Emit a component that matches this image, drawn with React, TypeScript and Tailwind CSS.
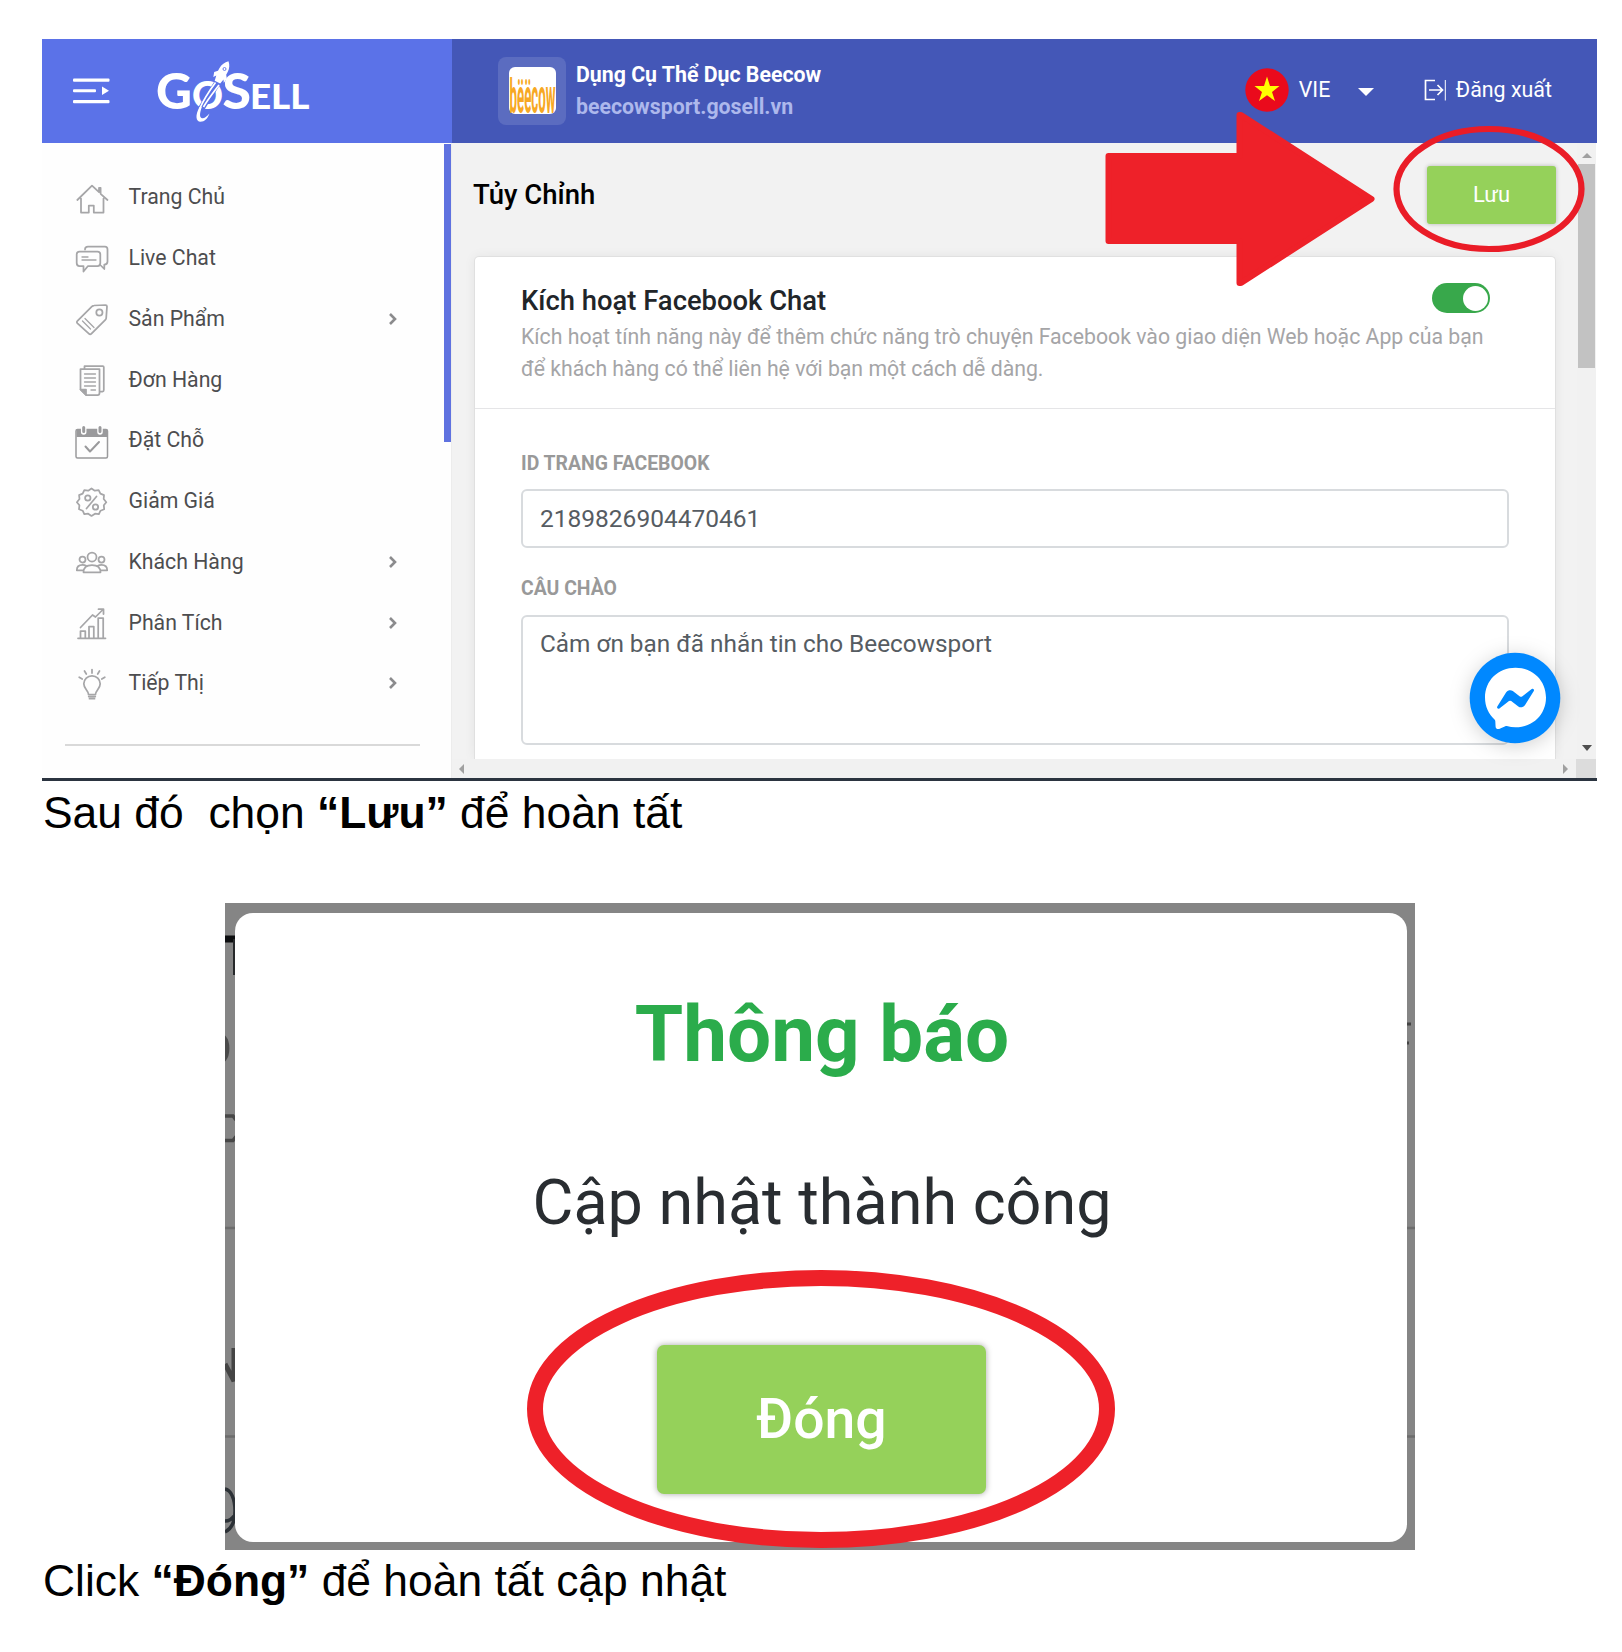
import type { ReactNode } from "react";

function Icon({ children }: { children: ReactNode }) {
  return (
    <svg viewBox="0 0 34 34" className="mt-[3px] h-[34px] w-[34px] shrink-0" fill="none" stroke="#a6a6a8" strokeWidth="1.75" strokeLinecap="round" strokeLinejoin="round">
      {children}
    </svg>
  );
}

const homeIcon = (
  <Icon>
    <path d="M2.3 18 17 3.6l7 6.6V5.800h1.600v6L32.500 18M6 16.500v14h7.800v-7h5v7h9.700v-14" />
  </Icon>
);
const chatIcon = (
  <Icon>
    <path d="M10 6.5C10 4.500 11 3.700 13 3.700h17c2 0 2.500 1 2.500 2.800v12c0 2-1 3-3.200 3v4.500l-3.500-3.500" />
    <path d="M4.500 8.500h18c2 0 2.800 1 2.800 2.800V20c0 2-1 3-2.800 3H13l-4.500 5.500V23h-4c-1.800 0-2.800-1-2.800-3v-8.700c0-1.800 1-2.800 2.800-2.800z" />
    <path d="M7 14h6M7 17h14" strokeWidth="1.300" />
  </Icon>
);
const tagIcon = (
  <Icon>
    <path d="M19 2.500 30.500 2c1 0 1.500.6 1.500 1.500l-.8 11.500c0 .8-.3 1.300-.9 1.900L16.500 30.700c-.9.900-1.800.9-2.700 0L2.500 20.300c-.9-.9-.9-1.600 0-2.500L17 3.300c.6-.5 1.200-.8 2-.8z" />
    <circle cx="24.400" cy="9.500" r="3.100" />
    <path d="m10 15.500 9 9M7.500 18l8 8" strokeWidth="1.300" />
  </Icon>
);
const ordersIcon = (
  <Icon>
    <path d="M9.500 5V2.200h18.300c.7 0 1 .4 1 1V26c0 1-.5 1.500-1.300 1.500h-2" />
    <path d="M5.500 5h19v24c0 1.300-.6 2-1.800 2H11l-5.500-5.500z" />
    <path d="M9.500 10h11M9.500 14h11M9.500 18h11M9.500 22h11M16 26h4.500" strokeWidth="1.300" />
    <path d="M5.500 25.500H11V31z" fill="#a3a3a5" />
  </Icon>
);
const bookingIcon = (
  <Icon>
    <rect x="1" y="4.500" width="31.500" height="28.500" rx="1.500" stroke="#9a9a9c" strokeWidth="1.500" />
    <path d="M1.500 5h30.500v7H1.500z" fill="#9a9a9c" stroke="none" />
    <path d="M8.700 2.500v4.500M25 2.500v4.500" stroke="#fff" strokeWidth="5.500" />
    <path d="M8.700 2.500v4M25 2.500v4" stroke="#9a9a9c" strokeWidth="3" />
    <path d="m10.500 21.500 4.500 5 9-9.500" stroke="#9a9a9c" strokeWidth="2" />
  </Icon>
);
const discountIcon = (
  <Icon>
    <path d="M16.500 2.500l3.300 2.200 3.900-.6 1.700 3.500 3.600 1.500-.3 3.900 2.600 3.200-2.500 3.100.4 3.900-3.700 1.500-1.600 3.500-3.900-.5-3.500 2.200-3.300-2.200-3.900.5-1.600-3.500L4 23.200l.4-3.900-2.500-3.100L4.500 13l-.4-3.900 3.600-1.500 1.600-3.500 3.900.6z" />
    <circle cx="12.800" cy="12" r="2.700" />
    <circle cx="20.500" cy="21" r="2.700" />
    <path d="M21.500 10.500 11.500 22.500" />
  </Icon>
);
const customersIcon = (
  <Icon>
    <circle cx="17" cy="11" r="4.500" />
    <circle cx="7.500" cy="13.500" r="3" />
    <circle cx="26.500" cy="13.500" r="3" />
    <path d="M8.500 26.300c0-4.600 2.700-7.300 8.500-7.300s8.500 2.700 8.500 7.300zM8 24.300H1.800c0-3.500 1.900-5.500 5.700-5.500 1.700 0 2.700.3 3.500.9M26 24.300h6.200c0-3.500-1.900-5.500-5.700-5.500-1.700 0-2.700.3-3.500.9" />
  </Icon>
);
const analyticsIcon = (
  <Icon>
    <path d="M3 31.300h27.500M5.500 31v-7h4.800v7M14 31V19.500h4.800V31M23.200 31V11h5v20" />
    <path d="M5.500 20.500 17.500 8l3 2 7.500-7.500M23.500 2.200h5v4.800" />
  </Icon>
);
const marketingIcon = (
  <Icon>
    <path d="M13.500 26.500c0-4-4.700-5.800-4.700-10.700A8.100 8.100 0 0 1 17 7.800a8.100 8.100 0 0 1 8.200 8c0 4.900-4.700 6.700-4.700 10.700z" />
    <path d="M13.700 28.500h6.600M14.500 30.700h5M17 1.500V5M9.500 3l1.800 3M24.500 3l-1.800 3M4.200 9.200 7.200 11M29.800 9.200 26.800 11" />
  </Icon>
);

const menu = [
  { label: "Trang Chủ", icon: homeIcon, more: false },
  { label: "Live Chat", icon: chatIcon, more: false },
  { label: "Sản Phẩm", icon: tagIcon, more: true },
  { label: "Đơn Hàng", icon: ordersIcon, more: false },
  { label: "Đặt Chỗ", icon: bookingIcon, more: false },
  { label: "Giảm Giá", icon: discountIcon, more: false },
  { label: "Khách Hàng", icon: customersIcon, more: true },
  { label: "Phân Tích", icon: analyticsIcon, more: true },
  { label: "Tiếp Thị", icon: marketingIcon, more: true },
];

function Logo() {
  return (
    <svg viewBox="0 0 160 70" className="ml-[43px] h-[70px] w-[160px]" fill="#fff" aria-label="GoSell">
      <g fontFamily="Lato" fontWeight="900">
        <text x="3" y="52.500" fontSize="49.500" textLength="36" lengthAdjust="spacingAndGlyphs">G</text>
        <text x="39" y="53" fontSize="37" textLength="31" lengthAdjust="spacingAndGlyphs">O</text>
        <text x="69.500" y="52.500" fontSize="49.500" textLength="28.500" lengthAdjust="spacingAndGlyphs">S</text>
        <text x="97" y="52.500" fontSize="34" textLength="59.500" lengthAdjust="spacingAndGlyphs">ELL</text>
      </g>
      <path d="M68 21 45.500 57" fill="none" stroke="#5b72e8" strokeWidth="6.500" />
      <path d="M75.500 5.200c-3.800.9-7 3.300-8.800 6.600l-1.700 3-3.800 1.200-.9 5 3-1.500-1.600 5.300 5.500 2.800 3.300-4 .3 3.300 3-4.300-.6-3.800 1.600-3.100c1.700-3.400 2-7 .7-10.500z" />
      <circle cx="71.500" cy="13" r="1.500" fill="none" stroke="#5b72e8" strokeWidth="0.900" />
      <path d="M62.500 26.500C57 34 51 43 47 52M66 29C60 37 55 43 50.500 51" fill="none" stroke="#fff" strokeWidth="1.700" />
      <path d="M46.500 51c-4.500 8-3.800 14.700 1 14.700 4 0 7-3 9-8.200-3 3.300-5.500 5.200-7.500 4.700-2.800-.8-2.300-5.200-.2-11.200z" />
    </svg>
  );
}

function SidebarHeader() {
  return (
    <div className="flex h-[104px] w-[410px] items-center bg-[#5b72e8] pl-[31px]">
      <svg viewBox="0 0 37 26" className="h-[26px] w-[37px]" fill="#fff">
        <rect y="0.500" width="36.500" height="3.200" rx="1" />
        <rect y="11.200" width="23" height="3" rx="1" />
        <rect y="22" width="36.500" height="3.200" rx="1" />
        <path d="M29 8.500 36 12.700 29 17z" />
      </svg>
      <Logo />
    </div>
  );
}

function TopBar() {
  return (
    <div className="flex h-[104px] w-[1145px] items-center bg-[#4457b7] pl-[46px] text-[21.4px] text-white">
      <div className="mt-[-1px] flex h-[68px] w-[68px] items-center justify-center rounded-lg bg-[#5b6cc0]">
        <svg viewBox="0 0 47 47" className="h-[47px] w-[47px] overflow-visible rounded-md bg-white">
          <text transform="translate(0.500 45.500) scale(1 2.850)" fontFamily="Roboto" fontWeight="700" fontSize="17" textLength="46" lengthAdjust="spacingAndGlyphs" fill="#f7a823">
            bëëcow
          </text>
        </svg>
      </div>
      <div className="ml-[10px] mt-[-1px] flex flex-col font-bold leading-[31.5px] text-[21.3px]">
        <span>Dụng Cụ Thể Dục Beecow</span>
        <span className="text-[#adb8ec]">beecowsport.gosell.vn</span>
      </div>
      <div className="ml-[423.5px] mt-[-2px] flex items-center">
        <svg viewBox="0 0 44 44" className="h-[44px] w-[44px]">
          <circle cx="22" cy="22" r="21.700" fill="#ea0a1c" />
          <path d="m22 8.500 3 9.500h9.500L27 24l3 9-8-5.700L14 33l3-9-7.500-6H19z" fill="#ff0" />
        </svg>
        <span className="ml-[10px]">VIE</span>
        <svg viewBox="0 0 16 8" className="ml-[28px] mt-[3px] h-[8px] w-[16px]" fill="#fff">
          <path d="M0 0h16L8 8z" />
        </svg>
        <svg viewBox="0 0 22 22" className="ml-[49.5px] h-[22px] w-[22px]" fill="none" stroke="#fff" strokeWidth="1.700">
          <path d="M11 1.500H1.500v19H11M5 11h13.500M13.500 6l5 5-5 5" />
          <path d="M21.300 1v20.500" strokeWidth="1" />
        </svg>
        <span className="ml-[10px]">Đăng xuất</span>
      </div>
    </div>
  );
}

function Sidebar() {
  return (
    <div className="relative h-[635px] w-[410px] border-r border-[#ececec] bg-[#fefefe] pt-[24px] text-[21.25px] text-[#4d4d4f]">
      {menu.map((m) => (
        <div key={m.label} className="flex h-[60.75px] items-center pl-[33px]">
          {m.icon}
          <span className="ml-[19.5px] flex-1">{m.label}</span>
          {m.more && (
            <svg viewBox="0 0 8 12" className="mr-[54px] h-[12px] w-[8px]" fill="none" stroke="#8b8b8d" strokeWidth="2.600">
              <path d="m1 1 5 5-5 5" />
            </svg>
          )}
        </div>
      ))}
      <div className="ml-[23px] mt-[30.250px] h-[2px] w-[355px] bg-[#d9d9d9]" />
      <div className="absolute right-0 top-[1px] h-[298px] w-[7px] bg-[#5f72e0]" />
    </div>
  );
}

function SettingsCard() {
  return (
    <div className="ml-[22px] mt-[32px] h-[503px] w-[1082px] rounded-t-[5px] border border-b-0 border-[#e0e0e0] bg-white shadow-[0_0_12px_rgba(0,0,0,0.06)]">
      <div className="flex h-[152px] border-b border-[#e5e5e7] pl-[46px] pt-[26px]">
        <div className="w-[911px]">
          <h2 className="text-[27.4px] font-medium leading-[36px] text-[#212529]">Kích hoạt Facebook Chat</h2>
          <p className="mt-[2px] w-[980px] text-[21.25px] leading-[31.8px] text-[#a5a5a7]">
            Kích hoạt tính năng này để thêm chức năng trò chuyện Facebook vào giao diện Web hoặc App của bạn
            <br />
            để khách hàng có thể liên hệ với bạn một cách dễ dàng.
          </p>
        </div>
        <div className="flex h-[30px] w-[58px] items-center justify-end rounded-full bg-[#38a84b] pr-[2px]">
          <div className="h-[25px] w-[25px] rounded-full bg-white" />
        </div>
      </div>
      <div className="ml-[46px] w-[988px]">
        <div className="pt-[41px] text-[19.4px] font-bold leading-[28px] text-[#999]">ID TRANG FACEBOOK</div>
        <div className="mt-[11px] flex h-[59px] items-center rounded-[6px] border-2 border-[#d8dbde] pl-[17px] text-[24.5px] text-[#565c62]">2189826904470461</div>
        <div className="mt-[27px] text-[19.4px] font-bold leading-[28px] text-[#999]">CÂU CHÀO</div>
        <div className="mt-[12px] h-[130px] rounded-[6px] border-2 border-[#d8dbde] pl-[17px] pt-[9px] text-[24.35px] leading-[36px] text-[#565c62]">Cảm ơn bạn đã nhắn tin cho Beecowsport</div>
      </div>
    </div>
  );
}

function MainPane() {
  return (
    <div className="relative h-[635px] w-[1144px] bg-[#f2f2f2]">
      <div className="flex h-[616px]">
        <div className="w-[1125px] overflow-hidden">
          <div className="flex items-center justify-between pl-[21px] pr-[21px] pt-[23px]">
            <h1 className="text-[27.5px] font-medium text-black">Tủy Chỉnh</h1>
            <div className="flex h-[58px] w-[129px] items-center justify-center rounded-[3px] bg-[#95d15a] text-[22px] text-white shadow-[0_0_4px_rgba(0,0,0,0.25)]">Lưu</div>
          </div>
          <SettingsCard />
        </div>
        <div className="flex w-[19px] flex-col items-center bg-[#f1f1f1]">
          <svg viewBox="0 0 10 5" className="mt-[10px] h-[5px] w-[10px]" fill="#a0a0a0">
            <path d="M0 5h10L5 0z" />
          </svg>
          <div className="mt-[6px] h-[204px] w-[17px] bg-[#c2c2c2]" />
          <svg viewBox="0 0 10 6" className="mb-[8px] mt-auto h-[6px] w-[10px]" fill="#4f4f4f">
            <path d="M0 0h10L5 6z" />
          </svg>
        </div>
      </div>
      <div className="flex h-[19px] items-center justify-between bg-[#f1f1f1] pl-[7px]">
        <svg viewBox="0 0 5 10" className="h-[10px] w-[5px]" fill="#a0a0a0">
          <path d="M5 0v10L0 5z" />
        </svg>
        <div className="flex h-full items-center gap-[8px]">
          <svg viewBox="0 0 5 10" className="h-[10px] w-[5px]" fill="#a0a0a0">
            <path d="M0 0v10L5 5z" />
          </svg>
          <div className="h-full w-[20px] bg-[#dcdcdc]" />
        </div>
      </div>
      <svg viewBox="0 0 130 130" className="absolute left-[998.300px] top-[489.500px] h-[130px] w-[130px] drop-shadow-[0_3px_10px_rgba(0,0,0,0.18)]">
        <circle cx="65" cy="65" r="45.300" fill="#0088ff" />
        <path d="M65.500 34.700C48 34.700 35 47.500 35 64.500c0 9 3.600 16.600 9.500 22 .5.500.8 1 .8 1.700l.3 5.500c.1 1.800 1.900 2.900 3.500 2.200l6.200-2.700c.5-.2 1.100-.3 1.600-.1 2.700.8 5.500 1.200 8.600 1.200 17.500 0 30.500-12.800 30.500-29.800S83 34.700 65.500 34.700z" fill="#fff" />
        <path d="m47.300 73.500 8.900-14.200a4.600 4.600 0 0 1 6.600-1.200l7.100 5.300a1.900 1.900 0 0 0 2.200 0l9.600-7.300c1.300-1 3 .6 2.100 1.900l-8.900 14.200a4.600 4.600 0 0 1-6.600 1.200l-7.100-5.300a1.900 1.900 0 0 0-2.200 0l-9.600 7.300c-1.300 1-3-.6-2.100-1.900z" fill="#0088ff" />
      </svg>
    </div>
  );
}

function Dashboard() {
  return (
    <div className="relative h-[742px] w-[1555px] font-['Roboto',sans-serif]">
      <div className="flex">
        <SidebarHeader />
        <TopBar />
      </div>
      <div className="flex">
        <Sidebar />
        <MainPane />
      </div>
      <div className="h-[3px] bg-[#2b3440]" />
      <svg viewBox="0 0 500 190" className="absolute left-[1055px] top-[66px] h-[190px] w-[500px]">
        <path d="M11.500 51h131V10h1.500L274.500 94l-130.500 84h-1.500v-42h-131z" fill="#ee2129" stroke="#ee2129" strokeWidth="6" strokeLinejoin="round" />
        <ellipse cx="392" cy="84" rx="92.500" ry="60" fill="none" stroke="#ea1c27" strokeWidth="6.200" />
      </svg>
    </div>
  );
}

function Notice() {
  return (
    <div className="relative h-[647px] w-[1190px] bg-[#858585] pl-[10px] pt-[10px] font-['Roboto',sans-serif]">
      <svg viewBox="0 0 1190 647" className="absolute left-0 top-0 h-[647px] w-[1190px]" fill="none">
        <path d="M0 36h10" stroke="#0c0d0f" strokeWidth="7" />
        <path d="M9.500 36v36" stroke="#26282a" strokeWidth="3" />
        <path d="M0 134c4.500 5 4.500 18 0 23z" fill="#4a4a4a" stroke="#4a4a4a" strokeWidth="2" />
        <path d="M0 213h8l3 4M0 237.500h8l3-4" stroke="#474747" strokeWidth="3.500" />
        <path d="M0 325h10M0 533.500h10M1180 325h10M1180 533.500h10" stroke="#6c6c6c" strokeWidth="2.500" />
        <path d="M9 445v33L0 461" stroke="#444" strokeWidth="5" />
        <path d="M0 586c6 1 10 10 10 22S6 626 0 629M0 618c4 0 7-2 9-5" stroke="#2c3136" strokeWidth="3.500" />
        <path d="M1180 121h6M1180 140h4" stroke="#444" strokeWidth="3" />
      </svg>
      <div className="relative flex h-[629px] w-[1172px] flex-col items-center rounded-[18px] bg-white">
        <div className="ml-[2px] mt-[71px] text-[78.2px] font-bold leading-[100px] text-[#2bac4b]">Thông báo</div>
        <div className="ml-[2px] mt-[79px] text-[62.9px] leading-[80px] text-[#292d31]">Cập nhật thành công</div>
        <div className="mt-[102px] flex h-[149px] w-[329px] items-center justify-center rounded-[7px] bg-[#95d15a] pl-px text-[55.3px] font-medium text-white shadow-[0_0_6px_rgba(0,0,0,0.35)]">Đóng</div>
      </div>
      <svg viewBox="0 0 600 290" className="absolute left-[296px] top-[361px] h-[290px] w-[600px]">
        <ellipse cx="300" cy="145" rx="286" ry="131" fill="none" stroke="#ee2129" strokeWidth="16" />
      </svg>
    </div>
  );
}

export default function App() {
  return (
    <div className="flex h-[1652px] w-[1622px] flex-col overflow-hidden bg-white pl-[42px] pt-[39px] font-['Liberation_Sans',Arial,sans-serif] text-[44.4px] leading-[52px] text-black">
      <Dashboard />
      <p className="mt-[6px] whitespace-pre pl-px">
        Sau đó{"  "}chọn <b>“Lưu”</b> để hoàn tất
      </p>
      <div className="mt-[64px] pl-[183px]">
        <Notice />
      </div>
      <p className="mt-[5px] whitespace-pre pl-px">
        Click <b>“Đóng”</b> để hoàn tất cập nhật
      </p>
    </div>
  );
}
